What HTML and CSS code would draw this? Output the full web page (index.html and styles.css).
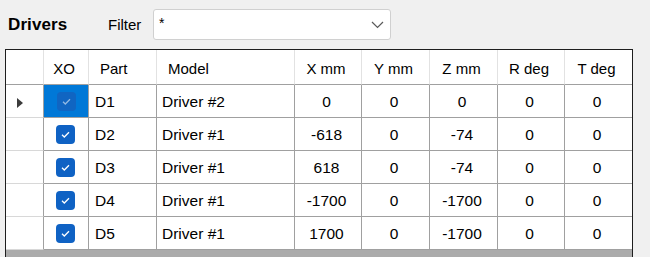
FILE: index.html
```
<!DOCTYPE html>
<html>
<head>
<meta charset="utf-8">
<link rel="stylesheet" href="styles.css">
</head>
<body>
<div class="toolbar">
  <span class="title">Drivers</span>
  <span class="filter-label">Filter</span>
  <div class="combo">
    <span class="combo-text">*</span>
    <svg class="chevron" width="13" height="8" viewBox="0 0 13 8"><polyline points="1,1 6.5,6.5 12,1" fill="none" stroke="#5a5a5a" stroke-width="1.2"/></svg>
  </div>
</div>
<div class="frame">
  <div class="grid">
    <div class="hc rh"></div>
    <div class="hc center">XO</div>
    <div class="hc left">Part</div>
    <div class="hc left">Model</div>
    <div class="hc center">X mm</div>
    <div class="hc center">Y mm</div>
    <div class="hc center">Z mm</div>
    <div class="hc center">R deg</div>
    <div class="hc center last">T deg</div>

    <div class="rc"><span class="arrow"></span></div>
    <div class="c center sel"><span class="cb cb-sel"><svg width="19" height="19" viewBox="0 0 19 19"><polyline points="6,9.8 8.3,12 13,7.2" fill="none" stroke="rgba(255,255,255,0.55)" stroke-width="1.3"/></svg></span></div>
    <div class="c left">D1</div>
    <div class="c left m">Driver #2</div>
    <div class="c center">0</div>
    <div class="c center">0</div>
    <div class="c center">0</div>
    <div class="c center">0</div>
    <div class="c center last">0</div>

    <div class="rc"></div>
    <div class="c center"><span class="cb"><svg width="19" height="19" viewBox="0 0 19 19"><polyline points="6,9.8 8.3,12 13,7.2" fill="none" stroke="#fff" stroke-width="1.3"/></svg></span></div>
    <div class="c left">D2</div>
    <div class="c left m">Driver #1</div>
    <div class="c center">-618</div>
    <div class="c center">0</div>
    <div class="c center">-74</div>
    <div class="c center">0</div>
    <div class="c center last">0</div>

    <div class="rc"></div>
    <div class="c center"><span class="cb"><svg width="19" height="19" viewBox="0 0 19 19"><polyline points="6,9.8 8.3,12 13,7.2" fill="none" stroke="#fff" stroke-width="1.3"/></svg></span></div>
    <div class="c left">D3</div>
    <div class="c left m">Driver #1</div>
    <div class="c center">618</div>
    <div class="c center">0</div>
    <div class="c center">-74</div>
    <div class="c center">0</div>
    <div class="c center last">0</div>

    <div class="rc"></div>
    <div class="c center"><span class="cb"><svg width="19" height="19" viewBox="0 0 19 19"><polyline points="6,9.8 8.3,12 13,7.2" fill="none" stroke="#fff" stroke-width="1.3"/></svg></span></div>
    <div class="c left">D4</div>
    <div class="c left m">Driver #1</div>
    <div class="c center">-1700</div>
    <div class="c center">0</div>
    <div class="c center">-1700</div>
    <div class="c center">0</div>
    <div class="c center last">0</div>

    <div class="rc"></div>
    <div class="c center"><span class="cb"><svg width="19" height="19" viewBox="0 0 19 19"><polyline points="6,9.8 8.3,12 13,7.2" fill="none" stroke="#fff" stroke-width="1.3"/></svg></span></div>
    <div class="c left">D5</div>
    <div class="c left m">Driver #1</div>
    <div class="c center">1700</div>
    <div class="c center">0</div>
    <div class="c center">-1700</div>
    <div class="c center">0</div>
    <div class="c center last">0</div>
  </div>
  <div class="fill"></div>
</div>
</body>
</html>
```
FILE: styles.css
```
html, body {
  margin: 0;
  padding: 0;
}
body {
  background: #f0f0f0;
  height: 257px;
  overflow: hidden;
  font-family: "Liberation Sans", Arial, sans-serif;
  color: #000;
}
.toolbar {
  display: flex;
  align-items: center;
  padding-top: 9px;
  height: 31px;
}
.title {
  width: 108px;
  padding-left: 8px;
  box-sizing: border-box;
  font-weight: bold;
  font-size: 17px;
  letter-spacing: 0.1px;
}
.filter-label {
  width: 45px;
  font-size: 15px;
}
.combo {
  width: 238px;
  height: 31px;
  box-sizing: border-box;
  background: #fff;
  border: 1px solid #d0d0d0;
  border-radius: 3px;
  display: flex;
  align-items: center;
  justify-content: space-between;
  padding: 0 6px 0 5px;
}
.combo-text {
  font-size: 14px;
  padding-bottom: 3px;
}
.chevron {
  display: block;
  margin-top: 1px;
}
.frame {
  margin: 9px 0 0 5px;
  width: 628px;
  height: 208px;
  box-sizing: border-box;
  border: 1px solid #1e1e1e;
  border-bottom: none;
  display: flex;
  flex-direction: column;
}
.grid {
  display: grid;
  grid-template-columns: 38px 45px 68px 138px 67px 68px 68px 67px 67px;
  grid-auto-rows: 33px;
  grid-template-rows: 35px;
  background: #fff;
}
.hc, .c, .rc {
  box-sizing: border-box;
  display: flex;
  align-items: center;
  white-space: nowrap;
}
.hc {
  border-right: 1px solid #e2e2e2;
  border-bottom: 1px solid #a0a0a0;
  font-size: 15px;
  padding-top: 3px;
}
.hc.left {
  padding-left: 11px;
}
.hc.center {
  justify-content: center;
  padding-right: 4px;
}
.c {
  border-right: 1px solid #a0a0a0;
  border-bottom: 1px solid #a0a0a0;
  font-size: 15.5px;
  padding-top: 1px;
}
.c.left {
  padding-left: 6px;
}
.c.left.m {
  padding-left: 5px;
}
.c.center {
  justify-content: center;
  padding-right: 3px;
}
.rc {
  border-right: 1px solid #a0a0a0;
  border-bottom: 1px solid #d8d8d8;
  padding-left: 11px;
}
.hc.last, .c.last {
  border-right: none;
}
.sel {
  background: #0078d7;
}
.c.center.sel {
  padding-right: 0;
  padding-top: 0;
}
.arrow {
  width: 0;
  height: 0;
  border-top: 5px solid transparent;
  border-bottom: 5px solid transparent;
  border-left: 6px solid #3c3c3c;
  margin-top: 3px;
}
.cb {
  width: 19px;
  height: 19px;
  border-radius: 4px;
  background: #0f62c4;
  display: block;
  margin-left: 1px;
}
.cb svg {
  display: block;
}
.cb-sel {
  background: #1065c2;
}
.fill {
  flex: 1;
  background: #ababab;
}
```
